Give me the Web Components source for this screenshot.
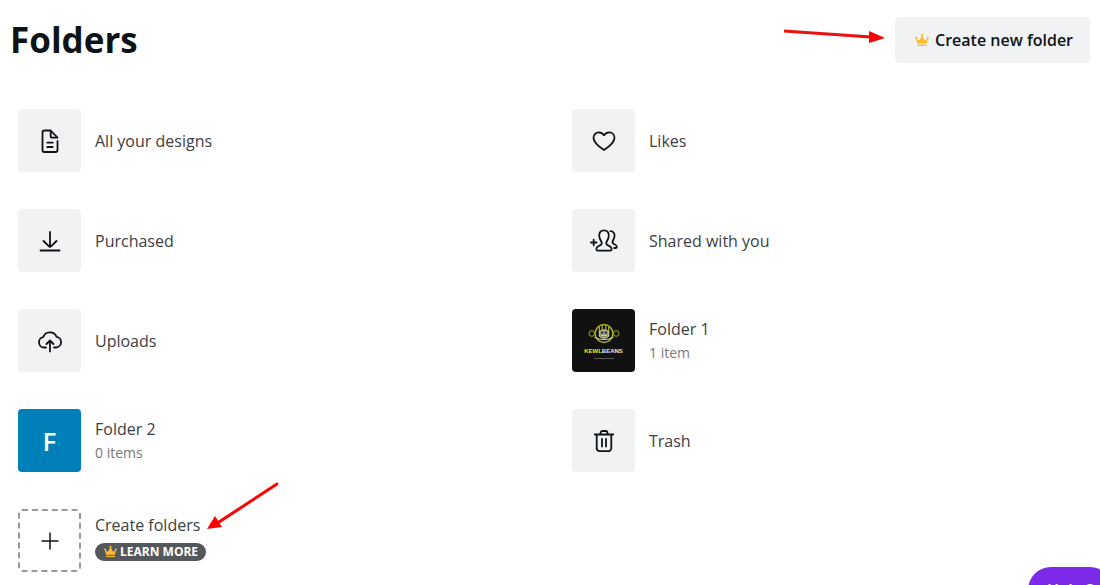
<!DOCTYPE html>
<html lang="en">
<head>
<meta charset="utf-8">
<meta name="viewport" content="width=device-width, initial-scale=1">
<title>Folders</title>
<style>
  body {
    margin: 0;
    background: #fff;
    color: #3c4043;
    font: 16px/24px "Open Sans", "Noto Sans", sans-serif;
    overflow: hidden;
  }
</style>
</head>
<body>
<folders-page>
  <folder-item icon="doc" name="All your designs"></folder-item>
  <folder-item icon="heart" name="Likes"></folder-item>
  <folder-item icon="download" name="Purchased"></folder-item>
  <folder-item icon="people" name="Shared with you"></folder-item>
  <folder-item icon="cloud" name="Uploads"></folder-item>
  <folder-item look="dark" name="Folder 1" note="1 item"><kewl-logo></kewl-logo></folder-item>
  <folder-item look="blue" name="Folder 2" note="0 items">F</folder-item>
  <folder-item icon="trash" name="Trash"></folder-item>
  <folder-item look="dashed" icon="plus" name="Create folders">
    <learn-more slot="extra">LEARN MORE</learn-more>
  </folder-item>
</folders-page>
<help-button>Help ?</help-button>

<script>
const line = 'fill="none" stroke="#0e1318" stroke-width="1.8" stroke-linecap="round" stroke-linejoin="round"';
const crown = `
  <svg viewBox="0 0 14 14" fill="#fdbc2f" aria-hidden="true">
    <path d="M2.200 10.600 1 5.200l3.300 2.200L7 2l2.700 5.400L13 5.200l-1.200 5.400z"/>
    <path d="M2.300 11.600h9.400V13H2.300z"/>
    <circle cx="7" cy="1.900" r="1.200"/><circle cx="1.200" cy="4.900" r="1.100"/><circle cx="12.800" cy="4.900" r="1.100"/>
  </svg>`;

/* 28x28 line icons */
const icons = {
  doc: `<path d="M21.500 14v9.300a1.700 1.700 0 0 1-1.700 1.700H8.200a1.700 1.700 0 0 1-1.700-1.700V5.200a1.700 1.700 0 0 1 1.700-1.700h6.500l6.800 7.200h-5.100a1.700 1.700 0 0 1-1.700-1.700V3.500M11.300 15.700h5.400M11.300 20h5.400"/>`,
  heart: `<path d="M14 23C8.500 19.500 3.500 15.800 3.500 10.800c0-3.400 2.400-5.500 5.200-5.500 2.300 0 4.100 1 5.300 3 1.200-2 3-3 5.300-3 2.800 0 5.200 2.100 5.200 5.500 0 5-5 8.700-10.500 12.200z"/>`,
  download: `<path d="M14 5v15M7.500 14l5.500 5.400q1 1 2 0l5.500-5.400M4.500 23.500h19"/>`,
  cloud: `<path d="M10 20.500H8a5.200 5.200 0 0 1-.8-10.300 7 6.700 0 0 1 13.300-.4h.2a5.400 5.400 0 0 1-.7 10.700H18M14 24.500V14M10.500 17 14 13.500l3.500 3.500"/>`,
  people: `<path d="M.9 15.500h5.600M3.700 12.700v5.600"/>
    <path d="M14 3.300c3.300 0 5 2.300 4.800 5.500-.1 2.700-1 4-2 5.500-.8 1.300-.7 3 .5 3.700 1.700 1 3.900 1.300 4.300 3.700.2 1.400-.4 2-1.600 2H8c-1.200 0-1.800-.6-1.600-2 .4-2.400 2.600-2.700 4.300-3.700 1.200-.7 1.300-2.400.5-3.700-1-1.500-1.900-2.800-2-5.500C9 5.600 10.700 3.300 14 3.300z"/>
    <path d="M20.500 4.200c3 .1 4.300 2.300 4 5-.2 2.300-1 3.200-1.700 4.600-.6 1.200-.3 2.300.8 3 1.500.8 3 1.200 3.200 2.700.1 1-.4 1.500-1.300 1.500h-1.300"/>`,
  trash: `<path d="M4.700 7.500h18.600M10.500 7.300V6a2 2 0 0 1 2-2h3a2 2 0 0 1 2 2v1.300M6.700 7.500v13.500a3.200 3.200 0 0 0 3.200 3.200h8.200a3.200 3.200 0 0 0 3.200-3.200V7.500M12 12v7.500M16 12v7.500"/>`,
  plus: `<path d="M14 6v16M6 14h16" stroke-width="1.500"/>`
};

customElements.define('folders-page', class extends HTMLElement {
  constructor() {
    super();
    this.attachShadow({mode: 'open'}).innerHTML = `
    <style>
      :host { display: block; padding: 17px 10px 8px; }
      header { display: flex; align-items: center; }
      h1 { margin: 0 auto 0 0; color: #0e1318; font-size: 35px; line-height: 46px; }
      .pointer { margin-right: 10px; }
      button {
        display: flex;
        align-items: center;
        gap: 6px;
        height: 46px;
        padding: 0 17px 0 20px;
        border: 0;
        border-radius: 4px;
        background: #f1f2f4;
        color: #0e1318;
        font: inherit;
        font-weight: 600;
      }
      button svg { width: 14px; height: 14px; }
      main {
        display: grid;
        grid-template-columns: 1fr 1fr;
        gap: 37px 28px;
        padding-top: 46px;
      }
    </style>
    <header>
      <h1>Folders</h1>
      <svg class="pointer" width="102" height="26" aria-hidden="true">
        <path d="M1 4 88 10" stroke="#e81010" stroke-width="3"/>
        <path d="M86 4 102 11 86 16z" fill="#f00"/>
      </svg>
      <button type="button">${crown}<span>Create new folder</span></button>
    </header>
    <main><slot></slot></main>`;
  }
});

customElements.define('folder-item', class extends HTMLElement {
  constructor() {
    super();
    const icon = icons[this.getAttribute('icon')];
    const note = this.getAttribute('note');
    this.attachShadow({mode: 'open'}).innerHTML = `
    <style>
      :host { display: flex; align-items: center; gap: 14px; padding: 0 8px; }
      .tile {
        display: flex;
        flex: none;
        align-items: center;
        justify-content: center;
        box-sizing: border-box;
        width: 63px;
        height: 63px;
        border-radius: 4px;
        background: #f1f2f4;
        overflow: hidden;
      }
      .dark { background: #111; }
      .blue { background: #0080b8; color: #fff; font-size: 26px; font-weight: 600; }
      .dashed { background: none; border: 2px dashed #999; }
      .text { display: flex; flex-direction: column; align-items: flex-start; }
      small { color: #77797c; font-size: 14px; }
    </style>
    <div class="tile ${this.getAttribute('look') || ''}">
      ${icon ? `<svg viewBox="0 0 28 28" width="28" height="28" ${line} aria-hidden="true">${icon}</svg>` : '<slot></slot>'}
    </div>
    <div class="text">
      <span>${this.getAttribute('name')}</span>
      ${note ? `<small>${note}</small>` : ''}
      <slot name="extra"></slot>
    </div>`;
  }
});

customElements.define('learn-more', class extends HTMLElement {
  constructor() {
    super();
    this.attachShadow({mode: 'open'}).innerHTML = `
    <style>
      :host { display: block; position: relative; padding: 6px 0 8px; }
      a {
        display: flex;
        align-items: center;
        gap: 3px;
        padding: 0 8px 0 9px;
        border-radius: 9px;
        background: #54575b;
        color: #fff;
        font-size: 12px;
        font-weight: 700;
        line-height: 18px;
        text-decoration: none;
      }
      a svg { width: 13px; height: 13px; }
      /* callout arrow, drawn over the empty space right of the label */
      .pointer { position: absolute; left: 112px; bottom: 38px; }
    </style>
    <a href="#">${crown}<slot></slot></a>
    <svg class="pointer" width="74" height="50" aria-hidden="true">
      <path d="M70 3 12 41" stroke="#f00" stroke-width="3" stroke-linecap="round"/>
      <path d="M0 48 8 35 15 46z" fill="#f00"/>
    </svg>`;
  }
});

customElements.define('kewl-logo', class extends HTMLElement {
  constructor() {
    super();
    this.attachShadow({mode: 'open'}).innerHTML = `
    <style>
      :host { display: flex; flex-direction: column; align-items: center; color: #e8e8e8; }
      b { padding-top: 3px; font: 700 6px/8px "Liberation Sans", sans-serif; }
      i { color: #e4ee10; font-style: normal; }
      hr { width: 20px; margin: 3px 0 0; border: 0; border-top: 1px solid #555; }
    </style>
    <svg width="32" height="21" viewBox="0 0 34 22" fill="none" stroke="#a9b21c" aria-hidden="true">
      <circle cx="17" cy="11" r="9.500" stroke-width="1.600"/>
      <circle cx="4" cy="11" r="3"/><circle cx="30" cy="11" r="3"/>
      <path d="M12 4v5M15 2v6M19 2v6M22 4v5" stroke="#d6e021"/>
      <path d="M12 9q5-4 10 0v5q-5 4-10 0z" fill="#8d8f72" stroke="#d9dcae"/>
      <circle cx="15" cy="10" r="1" fill="#222" stroke="none"/><circle cx="19" cy="10" r="1" fill="#222" stroke="none"/>
      <path d="M7 15q10 5 20 0M14 13h6" stroke="#e0e2b5"/>
    </svg>
    <b><i>KEWL</i>BEANS</b>
    <hr>`;
  }
});

customElements.define('help-button', class extends HTMLElement {
  constructor() {
    super();
    this.attachShadow({mode: 'open'}).innerHTML = `
    <style>
      /* hangs off the bottom right corner of the window */
      :host { display: block; position: fixed; right: -13px; bottom: -28px; }
      button {
        height: 46px;
        padding: 0 19px;
        border: 0;
        border-radius: 23px;
        background: #7d2ae8;
        color: #fff;
        font: inherit;
        font-weight: 600;
      }
    </style>
    <button type="button"><slot></slot></button>`;
  }
});
</script>
</body>
</html>
